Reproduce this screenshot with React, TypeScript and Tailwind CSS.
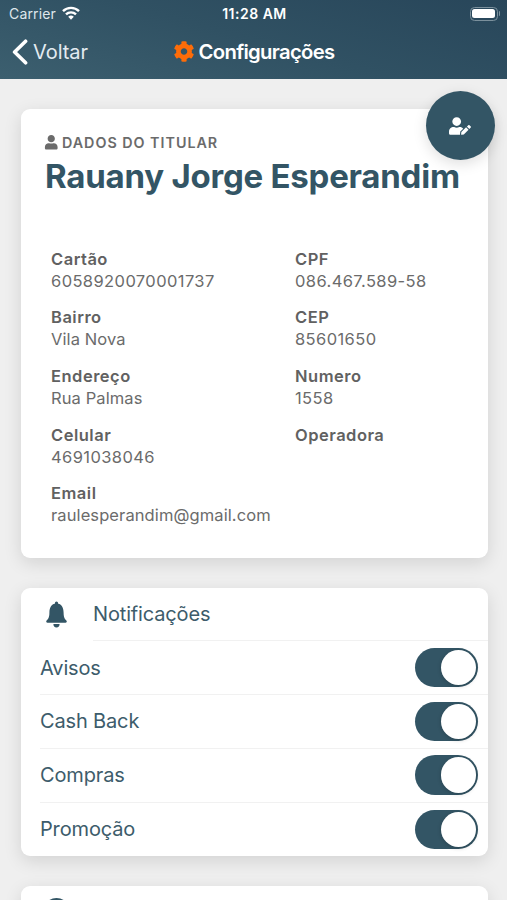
import { useState } from "react";
import { FaCog, FaUser, FaUserEdit } from "react-icons/fa";
import { IoIosNotifications } from "react-icons/io";

type Field = { label: string; value: string };

const leftFields: Field[] = [
  { label: "Cartão", value: "6058920070001737" },
  { label: "Bairro", value: "Vila Nova" },
  { label: "Endereço", value: "Rua Palmas" },
  { label: "Celular", value: "4691038046" },
  { label: "Email", value: "raulesperandim@gmail.com" },
];

const rightFields: Field[] = [
  { label: "CPF", value: "086.467.589-58" },
  { label: "CEP", value: "85601650" },
  { label: "Numero", value: "1558" },
  { label: "Operadora", value: "" },
];

const options = ["Avisos", "Cash Back", "Compras", "Promoção"];

const cardShadow = "shadow-[0_5px_18px_rgba(0,0,0,0.12)]";

function StatusBar() {
  return (
    <div className="grid h-[27px] grid-cols-3 items-center pr-[7px] pl-[9px] text-[14px] text-white">
      <div className="flex items-center gap-[6px]">
        <span className="tracking-[0.15px] text-[#dfe7ec]">Carrier</span>
        <svg viewBox="0 0 18 14" className="h-[14px] w-[18px] -translate-y-px" fill="none" stroke="white" strokeWidth="2.4">
          <path d="M1 5.2a11.3 11.3 0 0 1 16 0" />
          <path d="M4 8.4a7.1 7.1 0 0 1 10 0" />
          <path d="M6.2 10.8a4 4 0 0 1 5.6 0L9 13.7z" fill="white" stroke="none" />
        </svg>
      </div>
      <span className="text-center text-[14px] font-semibold tracking-[0.5px] whitespace-nowrap">11:28 AM</span>
      <div className="flex items-center justify-end gap-px">
        <div className="h-[14px] w-[28px] rounded-[4.5px] border border-[#7b909c] p-[1.5px]">
          <div className="h-full w-[22.5px] rounded-[2.5px] bg-white" />
        </div>
        <div className="h-[5px] w-[1.5px] rounded-r-full bg-[#7b909c]" />
      </div>
    </div>
  );
}

function NavBar() {
  return (
    <div className="grid h-[52px] grid-cols-[1fr_auto_1fr] items-center pb-[2px] text-white">
      <button className="flex items-center gap-[5px] pl-[12px] text-[20px] tracking-[-0.05px] text-[#e3ebf1]">
        <svg viewBox="0 0 16 26" className="h-[26px] w-[16px]" fill="none" stroke="white" strokeWidth="3.6" strokeLinecap="round" strokeLinejoin="round">
          <path d="M13.6 2.2 2.6 13l11 10.8" />
        </svg>
        <span>Voltar</span>
      </button>
      <h1 className="flex translate-x-[0.5px] items-center gap-[4px] pt-px text-[20.3px] font-semibold tracking-[-0.7px]">
        <FaCog className="size-[21px] -translate-y-px text-[#fd6c08]" />
        Configurações
      </h1>
    </div>
  );
}

function FieldList({ fields }: { fields: Field[] }) {
  return (
    <dl className="flex flex-col gap-[14.7px]">
      {fields.map((f) => (
        <div key={f.label} className="text-[16.5px] leading-[22px] text-[#6b6b6b]">
          <dt className="font-semibold tracking-[0.5px] text-[#616161]">{f.label}</dt>
          <dd className={"h-[22px] whitespace-nowrap " + (/^\d/.test(f.value) ? "tracking-[0.4px]" : "tracking-[0.1px]")}>
            {f.value}
          </dd>
        </div>
      ))}
    </dl>
  );
}

function Toggle() {
  const [on, setOn] = useState(true);
  return (
    <button
      role="switch"
      aria-checked={on}
      onClick={() => setOn(!on)}
      className={"flex h-[39.5px] w-[63px] items-center rounded-full px-[2px] " + (on ? "justify-end bg-[#335565]" : "justify-start bg-[#dddddd]")}
    >
      <span className="size-[35.5px] rounded-full bg-white shadow-[0_1px_4px_rgba(0,0,0,0.2)]" />
    </button>
  );
}

export default function App() {
  return (
    <div className="h-[900px] w-full overflow-hidden bg-[#efefef] font-['Inter','Liberation_Sans',sans-serif]">
      <header className="h-[79px] bg-[linear-gradient(195deg,#28465a_0%,#305163_50%,#3c5f6f_100%)]">
        <StatusBar />
        <NavBar />
      </header>

      <main className="flex flex-col gap-[29.5px] pt-[29.5px] pr-[19.5px] pl-[20.5px]">
        <section className={"relative h-[449.5px] rounded-[9px] bg-white px-[24.5px] pt-[25px] " + cardShadow}>
          <button className="absolute -top-[17.5px] -right-[7.5px] flex size-[69px] items-center justify-center rounded-full bg-[#335565] text-white shadow-[0_4px_14px_rgba(0,0,0,0.13)]">
            <FaUserEdit className="size-[22px] -translate-x-px" />
          </button>
          <h3 className="-ml-px flex h-[18px] items-center gap-[3.5px] text-[14.3px] font-semibold tracking-[0.98px] text-[#6b6b6b]">
            <FaUser className="size-[14.5px]" />
            DADOS DO TITULAR
          </h3>
          <h2 className="h-[50px] text-[33px] leading-[49px] font-bold tracking-[-0.23px] whitespace-nowrap text-[#335565]">
            Rauany Jorge Esperandim
          </h2>
          <div className="mt-[46px] grid grid-cols-[244px_1fr] pl-[6px]">
            <FieldList fields={leftFields} />
            <FieldList fields={rightFields} />
          </div>
        </section>

        <section className={"h-[268.5px] overflow-hidden rounded-[9px] bg-white text-[20px] tracking-[-0.15px] text-[#3d5c6b] " + cardShadow}>
          <div className="flex h-[53.7px] items-center pl-[19.5px]">
            <IoIosNotifications className="mr-[20px] size-[33px] text-[#335565]" />
            <div className="flex h-full flex-1 items-center border-b border-[#f1f1f1]">Notificações</div>
          </div>
          {options.map((o, i) => (
            <div
              key={o}
              className={"ml-[19.5px] flex h-[53.8px] items-center justify-between pr-[9.5px] " + (i < options.length - 1 ? "border-b border-[#f1f1f1]" : "")}
            >
              <span>{o}</span>
              <Toggle />
            </div>
          ))}
        </section>

        <section className={"h-[60px] shrink-0 rounded-[9px] bg-white pt-[12px] pl-[22.5px] " + cardShadow}>
          <div className="size-[27px] rounded-full bg-[#335565]" />
        </section>
      </main>
    </div>
  );
}
